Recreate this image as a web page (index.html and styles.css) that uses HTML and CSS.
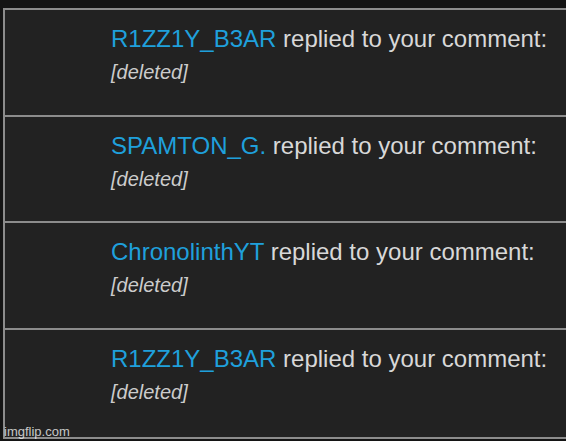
FILE: index.html
```html
<!DOCTYPE html>
<html lang="en">
<head>
  <meta charset="UTF-8" />
  <title>Notifications</title>
  <link rel="stylesheet" href="styles.css">
</head>
<body>
  <div class="lista">
    <div class="item">
      <p class="linha"><a class="usuario">R1ZZ1Y_B3AR</a> replied to your comment:</p>
      <p class="texto">[deleted]</p>
    </div>
    <div class="item curto">
      <p class="linha"><a class="usuario">SPAMTON_G.</a> replied to your comment:</p>
      <p class="texto">[deleted]</p>
    </div>
    <div class="item">
      <p class="linha"><a class="usuario">ChronolinthYT</a> replied to your comment:</p>
      <p class="texto">[deleted]</p>
    </div>
    <div class="item">
      <p class="linha"><a class="usuario">R1ZZ1Y_B3AR</a> replied to your comment:</p>
      <p class="texto">[deleted]</p>
    </div>
  </div>
  <span class="marca">imgflip.com</span>
</body>
</html>
```

FILE: styles.css
```css
body {
  margin: 0;
  background: #141414;
  font-family: 'Liberation Sans', Arial, sans-serif;
  height: 441px;
  overflow: hidden;
}
.lista {
  margin: 8px 0 0 3px;
  background: #222222;
  border: 2px solid #8c8c8c;
  border-right: none;
}
.item {
  height: 107px;
  padding: 0 0 0 106px;
  box-sizing: border-box;
  border-bottom: 2px solid #8c8c8c;
}
.item.curto {
  height: 106px;
}
.item:last-child {
  height: 107px;
  border-bottom: none;
}
.linha {
  margin: 0;
  padding-top: 15px;
  font-size: 24px;
  line-height: 28px;
  color: #d8d8d8;
}
.usuario {
  color: #1fa0dc;
}
.texto {
  margin: 8px 0 0;
  font-size: 20px;
  line-height: 22px;
  font-style: italic;
  color: #cccccc;
}
.marca {
  position: absolute;
  left: 4px;
  top: 424px;
  font-size: 13px;
  color: rgba(255, 255, 255, 0.75);
}
```
